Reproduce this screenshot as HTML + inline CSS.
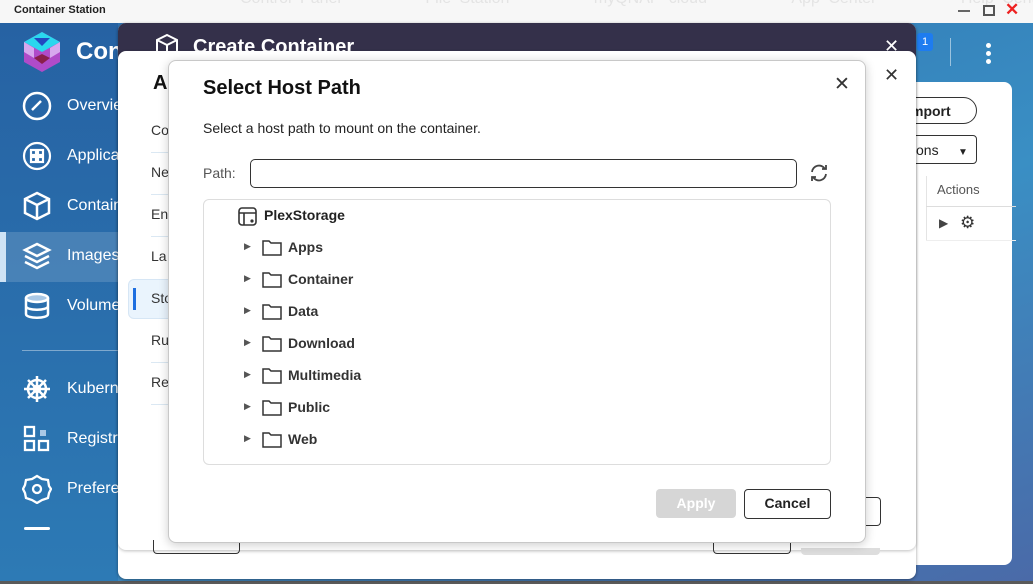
<!DOCTYPE html>
<html><head><meta charset="utf-8"><style>
*{box-sizing:border-box;margin:0;padding:0}
body{width:1033px;height:584px;overflow:hidden;position:relative;font-family:"Liberation Sans",Arial,sans-serif;background:#5a5a5a}
.abs{position:absolute}
.titlebar{left:0;top:0;width:1033px;height:23px;background:#f7f7f7;}
.app{left:0;top:23px;width:1033px;height:558px;background:linear-gradient(160deg,#2e6fae 0%,#3a8fc4 55%,#4a6aa8 100%)}
.side{left:0;top:23px;width:118px;height:558px;background:linear-gradient(180deg,#2662a3,#2d7ab5)}
.nav{color:#fff;font-size:16px;left:67px}
</style></head><body>
<div class="abs titlebar"></div>
<div class="abs" style="left:240px;top:-10px;font-size:16px;color:#e4e4e4;white-space:nowrap;word-spacing:4px">Control Panel&nbsp;&nbsp;&nbsp;&nbsp;&nbsp;&nbsp;&nbsp;&nbsp;&nbsp;&nbsp;File Station&nbsp;&nbsp;&nbsp;&nbsp;&nbsp;&nbsp;&nbsp;&nbsp;&nbsp;&nbsp;myQNAP cloud&nbsp;&nbsp;&nbsp;&nbsp;&nbsp;&nbsp;&nbsp;&nbsp;&nbsp;&nbsp;App Center&nbsp;&nbsp;&nbsp;&nbsp;&nbsp;&nbsp;&nbsp;&nbsp;&nbsp;&nbsp;Help Center</div>
<div class="abs" style="left:14px;top:4px;font-size:11px;font-weight:bold;color:#222">Container Station</div>
<div class="abs" style="left:958px;top:10px;width:12px;height:2px;background:#666"></div>
<div class="abs" style="left:983px;top:5px;width:12px;height:11px;border:2px solid #555"></div>
<div class="abs" style="left:1005px;top:0px;color:#e22;font-size:17px;font-weight:bold">✕</div>
<div class="abs app"></div>
<div class="abs side"></div>
<div class="abs" style="left:0;top:232px;width:118px;height:50px;background:rgba(255,255,255,0.15);border-left:6px solid #cfe3f5"></div>
<svg class="abs" style="left:22px;top:32px" width="40" height="40" viewBox="0 0 40 40">
<polygon points="20,0 38,10 38,30 20,40 2,30 2,10" fill="#b04bc9"/>
<polygon points="2,10 20,0 38,10 20,20" fill="#2ad7ee"/>
<polygon points="12,6 28,6 20,14" fill="#2348c0"/>
<polygon points="2,10 12,16 12,26 2,20" fill="#d7a8ee"/>
<polygon points="38,10 28,16 28,26 38,20" fill="#d7a8ee"/>
<polygon points="12,26 20,22 28,26 20,32" fill="#8a1f4a"/>
</svg>
<div class="abs" style="left:76px;top:38px;color:#fff;font-size:24px;font-weight:bold">Con</div>
<svg class="abs" style="left:22px;top:91px" width="30" height="30" viewBox="0 0 30 30" fill="none" stroke="#fff" stroke-width="2.5"><circle cx="15" cy="15" r="13"/><path d="M10 19 L19 10"/></svg>
<div class="abs nav" style="top:97px">Overview</div>
<svg class="abs" style="left:22px;top:141px" width="30" height="30" viewBox="0 0 30 30" fill="none" stroke="#fff" stroke-width="2.2"><circle cx="15" cy="15" r="13"/><rect x="9" y="9" width="5" height="5"/><rect x="16" y="9" width="5" height="5"/><rect x="9" y="16" width="5" height="5"/><rect x="16" y="16" width="5" height="5"/></svg>
<div class="abs nav" style="top:147px">Applications</div>
<svg class="abs" style="left:22px;top:191px" width="30" height="30" viewBox="0 0 30 30" fill="none" stroke="#fff" stroke-width="2.5"><path d="M15 2 L27 8 L27 22 L15 28 L3 22 L3 8Z M3 8 L15 14 L27 8 M15 14 V28"/></svg>
<div class="abs nav" style="top:197px">Containers</div>
<svg class="abs" style="left:22px;top:241px" width="30" height="30" viewBox="0 0 30 30" fill="none" stroke="#fff" stroke-width="2.5"><path d="M15 3 L27 9 L15 15 L3 9Z M3 15 L15 21 L27 15 M3 21 L15 27 L27 21"/></svg>
<div class="abs nav" style="top:247px">Images</div>
<svg class="abs" style="left:22px;top:291px" width="30" height="30" viewBox="0 0 30 30" fill="none" stroke="#fff" stroke-width="2.5"><ellipse cx="15" cy="7" rx="11" ry="4" fill="#a9c8e6"/><path d="M4 7 V23 C4 28 26 28 26 23 V7 M4 15 C4 20 26 20 26 15"/></svg>
<div class="abs nav" style="top:297px">Volumes</div>
<div class="abs" style="left:22px;top:350px;width:96px;height:1px;background:rgba(255,255,255,0.4)"></div>
<svg class="abs" style="left:22px;top:374px" width="30" height="30" viewBox="0 0 30 30" fill="none" stroke="#fff" stroke-width="2.5"><circle cx="15" cy="15" r="9"/><circle cx="15" cy="15" r="3"/><path d="M15 2 V28 M2 15 H28 M6 6 L24 24 M24 6 L6 24"/></svg>
<div class="abs nav" style="top:380px">Kubernetes</div>
<svg class="abs" style="left:22px;top:424px" width="30" height="30" viewBox="0 0 30 30" fill="none" stroke="#fff" stroke-width="2.3"><rect x="3" y="3" width="9" height="9"/><rect x="3" y="17" width="9" height="9"/><rect x="17" y="17" width="9" height="9"/><rect x="18" y="6" width="6" height="6" fill="#a9c8e6" stroke="none"/></svg>
<div class="abs nav" style="top:430px">Registry</div>
<svg class="abs" style="left:22px;top:474px" width="30" height="30" viewBox="0 0 30 30" fill="none" stroke="#fff" stroke-width="2.3"><path d="M15 2 L20 5 L26 6 L27 12 L29 15 L27 19 L26 24 L20 26 L15 29 L10 26 L4 24 L3 19 L1 15 L3 11 L4 6 L10 5Z"/><circle cx="15" cy="15" r="4"/></svg>
<div class="abs nav" style="top:480px">Preferences</div>
<div class="abs" style="left:24px;top:527px;width:26px;height:3px;background:#fff;border-radius:2px"></div>
<div class="abs" style="left:917px;top:33px;width:16px;height:18px;background:#1e7cf0;border-radius:3px;color:#fff;font-size:11px;text-align:center;line-height:18px">1</div>
<div class="abs" style="left:950px;top:38px;width:1px;height:28px;background:rgba(255,255,255,0.5)"></div>
<div class="abs" style="left:986px;top:43px;width:5px;height:5px;border-radius:50%;background:#fff;box-shadow:0 8px 0 #fff,0 16px 0 #fff"></div>
<div class="abs" style="left:840px;top:82px;width:172px;height:483px;background:#fff;border-radius:8px"></div>
<div class="abs" style="left:840px;top:97px;width:137px;height:27px;border:1.5px solid #333;border-radius:14px;font-size:14px;font-weight:bold;color:#222;padding:5px 0 0 70px">mport</div>
<div class="abs" style="left:840px;top:135px;width:137px;height:29px;border:1.5px solid #333;border-radius:4px;font-size:14px;color:#222;padding:6px 0 0 75px">ons&nbsp;&nbsp;&nbsp;&nbsp;&nbsp;<span style="font-size:10px">▼</span></div>
<div class="abs" style="left:840px;top:178px;width:38px;height:88px;background:#f0f2f7;border-radius:6px"></div>
<div class="abs" style="left:926px;top:176px;width:1px;height:64px;background:#e4e4e4"></div>
<div class="abs" style="left:937px;top:182px;font-size:13px;color:#555">Actions</div>
<div class="abs" style="left:926px;top:206px;width:90px;height:1px;background:#ddd"></div>
<div class="abs" style="left:926px;top:240px;width:90px;height:1px;background:#eee"></div>
<div class="abs" style="left:939px;top:216px;font-size:12px;color:#444">▶</div>
<div class="abs" style="left:960px;top:213px;font-size:17px;color:#333">⚙</div>
<div class="abs" style="left:118px;top:23px;width:798px;height:556px;background:#fff;border-radius:8px;overflow:hidden;box-shadow:0 1px 3px rgba(0,0,0,.4)">
 <div style="height:40px;background:#34304a"></div>
</div>
<svg class="abs" style="left:154px;top:33px" width="26" height="26" viewBox="0 0 26 26" fill="none" stroke="#fff" stroke-width="2"><path d="M13 2 L23 7 L23 19 L13 24 L3 19 L3 7Z M3 7 L13 12 L23 7 M13 12 V24"/></svg>
<div class="abs" style="left:193px;top:36px;color:#fff;font-size:20px;font-weight:bold">Create Container</div>
<div class="abs" style="left:884px;top:36px;color:#fff;font-size:18px">✕</div>
<div class="abs" style="left:118px;top:51px;width:798px;height:499px;background:#fff;border-radius:8px;box-shadow:0 1px 3px rgba(0,0,0,.25)"></div>
<div class="abs" style="left:884px;top:65px;color:#333;font-size:18px">✕</div>
<div class="abs" style="left:153px;top:72px;font-size:20px;font-weight:bold;color:#111">A</div>
<div class="abs" style="left:151px;top:122px;font-size:14px;color:#333">Co</div>
<div class="abs" style="left:151px;top:164px;font-size:14px;color:#333">Ne</div>
<div class="abs" style="left:151px;top:206px;font-size:14px;color:#333">En</div>
<div class="abs" style="left:151px;top:248px;font-size:14px;color:#333">La</div>
<div class="abs" style="left:128px;top:279px;width:50px;height:40px;background:#eaf4fd;border:1px solid #d6e6f5;border-radius:6px"></div>
<div class="abs" style="left:133px;top:288px;width:3px;height:22px;background:#1e6fe0"></div>
<div class="abs" style="left:151px;top:290px;font-size:14px;color:#333">Sto</div>
<div class="abs" style="left:151px;top:332px;font-size:14px;color:#333">Ru</div>
<div class="abs" style="left:151px;top:374px;font-size:14px;color:#333">Re</div>
<div class="abs" style="left:151px;top:152px;width:20px;height:1px;background:#dbe8f3;box-shadow:0 42px 0 #dbe8f3,0 84px 0 #dbe8f3,0 210px 0 #dbe8f3,0 252px 0 #dbe8f3"></div>
<div class="abs" style="left:866px;top:497px;width:15px;height:29px;border:1.5px solid #333;border-left:none;border-radius:0 4px 4px 0"></div>
<div class="abs" style="left:153px;top:540px;width:87px;height:14px;border:1.5px solid #333;border-top:none;border-radius:0 0 4px 4px"></div>
<div class="abs" style="left:713px;top:540px;width:78px;height:14px;border:1.5px solid #333;border-top:none;border-radius:0 0 4px 4px"></div>
<div class="abs" style="left:801px;top:548px;width:79px;height:7px;background:#ddd;border-radius:0 0 4px 4px"></div>
<div class="abs" style="left:168px;top:60px;width:698px;height:483px;background:#fff;border-radius:8px;border:1px solid #c8c8c8;box-shadow:0 2px 10px rgba(0,0,0,.2)"></div>
<div class="abs" style="left:203px;top:77px;font-size:20px;font-weight:bold;color:#111">Select Host Path</div>
<div class="abs" style="left:834px;top:73px;font-size:19px;color:#333">✕</div>
<div class="abs" style="left:203px;top:120px;font-size:14px;color:#222">Select a host path to mount on the container.</div>
<div class="abs" style="left:203px;top:165px;font-size:14px;color:#555">Path:</div>
<div class="abs" style="left:250px;top:159px;width:547px;height:29px;border:1.5px solid #333;border-radius:5px"></div>
<svg class="abs" style="left:808px;top:163px" width="22" height="20" viewBox="0 0 22 20" fill="none" stroke="#444" stroke-width="1.8"><path d="M4 9 A7 7 0 0 1 17 6 M18 11 A7 7 0 0 1 5 14"/><path d="M14 6 H18 V2 M8 14 H4 V18"/></svg>
<div class="abs" style="left:203px;top:199px;width:628px;height:266px;border:1px solid #ddd;border-radius:6px"></div>
<svg class="abs" style="left:238px;top:207px" width="19" height="19" viewBox="0 0 19 19" fill="none" stroke="#333" stroke-width="1.6"><rect x="1" y="1" width="17" height="17" rx="3"/><path d="M1 6 H18 M6 6 V18"/><circle cx="14" cy="14" r="0.8" fill="#333"/></svg>
<div class="abs" style="left:264px;top:207px;font-size:14px;font-weight:bold;color:#222">PlexStorage</div>
<div class="abs" style="left:656px;top:489px;width:80px;height:29px;background:#d6d6d6;border-radius:4px;color:#fff;font-size:14px;font-weight:bold;text-align:center;line-height:29px">Apply</div>
<div class="abs" style="left:744px;top:489px;width:87px;height:30px;border:1.5px solid #333;border-radius:4px;color:#222;font-size:14px;font-weight:bold;text-align:center;line-height:27px">Cancel</div>
<div class="abs" style="left:0;top:0">
<div class="abs" style="left:244px;top:241px;font-size:9px;color:#555">▶</div><svg class="abs" style="left:262px;top:239px" width="20" height="17" viewBox="0 0 20 17" fill="none" stroke="#333" stroke-width="1.5"><path d="M1 2 H7 L9 4 H19 V16 H1Z"/></svg><div class="abs" style="left:288px;top:239px;font-size:14px;font-weight:bold;color:#333">Apps</div>
<div class="abs" style="left:244px;top:273px;font-size:9px;color:#555">▶</div><svg class="abs" style="left:262px;top:271px" width="20" height="17" viewBox="0 0 20 17" fill="none" stroke="#333" stroke-width="1.5"><path d="M1 2 H7 L9 4 H19 V16 H1Z"/></svg><div class="abs" style="left:288px;top:271px;font-size:14px;font-weight:bold;color:#333">Container</div>
<div class="abs" style="left:244px;top:305px;font-size:9px;color:#555">▶</div><svg class="abs" style="left:262px;top:303px" width="20" height="17" viewBox="0 0 20 17" fill="none" stroke="#333" stroke-width="1.5"><path d="M1 2 H7 L9 4 H19 V16 H1Z"/></svg><div class="abs" style="left:288px;top:303px;font-size:14px;font-weight:bold;color:#333">Data</div>
<div class="abs" style="left:244px;top:337px;font-size:9px;color:#555">▶</div><svg class="abs" style="left:262px;top:335px" width="20" height="17" viewBox="0 0 20 17" fill="none" stroke="#333" stroke-width="1.5"><path d="M1 2 H7 L9 4 H19 V16 H1Z"/></svg><div class="abs" style="left:288px;top:335px;font-size:14px;font-weight:bold;color:#333">Download</div>
<div class="abs" style="left:244px;top:369px;font-size:9px;color:#555">▶</div><svg class="abs" style="left:262px;top:367px" width="20" height="17" viewBox="0 0 20 17" fill="none" stroke="#333" stroke-width="1.5"><path d="M1 2 H7 L9 4 H19 V16 H1Z"/></svg><div class="abs" style="left:288px;top:367px;font-size:14px;font-weight:bold;color:#333">Multimedia</div>
<div class="abs" style="left:244px;top:401px;font-size:9px;color:#555">▶</div><svg class="abs" style="left:262px;top:399px" width="20" height="17" viewBox="0 0 20 17" fill="none" stroke="#333" stroke-width="1.5"><path d="M1 2 H7 L9 4 H19 V16 H1Z"/></svg><div class="abs" style="left:288px;top:399px;font-size:14px;font-weight:bold;color:#333">Public</div>
<div class="abs" style="left:244px;top:433px;font-size:9px;color:#555">▶</div><svg class="abs" style="left:262px;top:431px" width="20" height="17" viewBox="0 0 20 17" fill="none" stroke="#333" stroke-width="1.5"><path d="M1 2 H7 L9 4 H19 V16 H1Z"/></svg><div class="abs" style="left:288px;top:431px;font-size:14px;font-weight:bold;color:#333">Web</div>
</div>
</body></html>
